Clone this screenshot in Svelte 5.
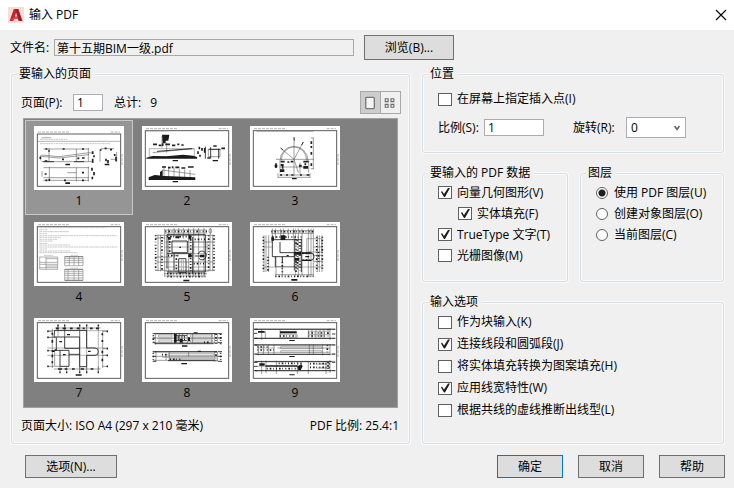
<script>
  let file = $state("第十五期BIM一级.pdf");
  let page = $state("1");
  let view = $state("single");
  let selected = $state(1);
  let onScreen = $state(false);
  let scale = $state("1");
  let rotation = $state("0");
  let layer = $state("pdf");

  let data = $state([
    { label: "向量几何图形(V)", checked: true },
    { label: "实体填充(F)", checked: true, nested: true },
    { label: "TrueType 文字(T)", checked: true },
    { label: "光栅图像(M)", checked: false },
  ]);

  let options = $state([
    { label: "作为块输入(K)", checked: false },
    { label: "连接线段和圆弧段(J)", checked: true },
    { label: "将实体填充转换为图案填充(H)", checked: false },
    { label: "应用线宽特性(W)", checked: true },
    { label: "根据共线的虚线推断出线型(L)", checked: false },
  ]);

  const layers = [
    { value: "pdf", label: "使用 PDF 图层(U)" },
    { value: "object", label: "创建对象图层(O)" },
    { value: "current", label: "当前图层(C)" },
  ];

  // Sheet previews, 270x192 units: thin lines, heavy lines, dashed annotations, solid areas
  const sheets = [
    {
      top: 24,
      gray: "M10 46H260M22 35H52",
      faint: "M18 40H100M18 53H230",
      thin: "M28 69H165M22 87L75 92L165 80L178 82M22 91L75 96L165 86M22 107H178M45 66V107M127 69V107M163 66V107M28 125H165M28 155H165M46 122V166M127 125V166M163 122V166M100 140H127M28 163H165M200 68H240M198 70V107M248 78V108M230 100H248M20 87V103M24 135V152",
      heavy: "M28 107H60M120 107H150",
      blobs: "M34 69H40M45 73V77M86 69H92M144 69H150M84 100H90M130 97H136M144 96H152M32 105H40M32 144H38M144 140H150M34 163H40M46 159V165M90 163H96M144 163H150M176 76V84M180 88V94M176 98V110M174 125V134M180 138V148M175 152V160M200 70V74M212 67H218M228 71H234M242 84V90M246 92V106M216 98V106M222 102V112M19 92V99",
      solid: "M94 113h14v5h-14zM94 169h14v5h-14zM212 113h14v5h-14z",
    },
    {
      faint: "M14 16H75",
      gray: "M22 68H157V92H22z",
      thin: "M32 80L90 74L155 68M60 30V65M74 50V80M66 120V160M80 122V155M96 125V155M112 128V155M128 130V155M144 132V155M60 132L160 145M199 70H234V92H199z",
      heavy: "M45 76L150 68M190 62V98M206 64V96M230 68V98M200 70H235",
      blobs: "M33 55H45M50 58H58M62 52V60M70 55H84M90 58H100M106 55H112M118 57H125M60 123H72M78 125H86M92 121V127M100 124H112M118 126H130M138 123H155M172 62V70M168 76V84M174 86V92M180 66V74M188 66V80M238 67H249M196 96H206M214 60H224",
      solid: "M60 26h22l-3 18h-8v8h-9zM13 95l20-5 40 1 50-5 30 3 12 4v5H13zM20 154l18-7 32 3 90 4v8H20zM92 102h16v4H92zM212 102h16v4h-16zM92 165h16v4H92zM54 138l8-6v22h-8z",
    },
    {
      gray: "M20 16H190",
      thin: "M90 105A42 44 0 1 1 174 105M94 103A38 40 0 1 1 170 103M132 34V150M132 100L160 48M132 100L92 66M78 100H192M190 36V128M132 100L145 140M88 123H175M88 147H180M85 154H180M90 105V140M176 105V140M150 110V145M182 36H192M182 128H192M84 142V156M180 142V156",
      heavy: "M132 34L133 44M160 48L155 57M92 66L99 72",
      blobs: "M92 107H104M112 108H118M122 107H130M160 107H176M184 46V54M184 60V66M184 78V86M184 112V120M90 147H96M108 147H114M124 147H130M150 147H156M170 147H178M78 112V126M98 114V128M166 112V118",
      solid: "M74 116h8v8h-8zM92 114h8v6h-8zM90 130h13v8H90zM147 116h8v6h-8zM160 120h14v8h-14zM126 156h14v4h-14z",
    },
    {
      faint: "M16 17H215M16 23H40M16 29H105M16 35H40M16 41H250M16 46H80M16 52H70M16 57H55M16 64H40M16 69H110M16 75H250M16 81H40M16 87H110M16 92H130M30 100H58M110 100H132M110 138H132",
      gray: "M17 105H71V142H17zM36 105V142M36 110H71M17 121H71M17 127H71M36 132H71M17 137H71M92 104H147V131H92zM92 110H147M92 116H147M92 122H147M106 104V131M120 104V131M134 104V131M92 142H147V175H92zM92 148H147M92 154H147M92 160H147M92 168H147M102 142V175M120 142V175M134 142V175",
      thin: "M92 104H147M92 142H147M92 175H147",
    },
    {
      gray: "M70 60H200M70 75H200M70 135H200M70 148H200M155 60H195V95H155zM118 112V150M124 112V150",
      thin: "M40 40H218M40 48H70M195 60H218M40 105H90M40 120H218M40 145H218M48 38V148M56 38V148M68 20V165M80 20V165M96 18V45M110 18V50M124 18V50M140 18V165M155 18V165M170 18V165M186 18V165M204 38V148M212 38V148M68 24H195M68 33H195M70 162H190M66 155H195M205 18V38M201 27A4 7 0 1 0 209 27A4 7 0 1 0 201 27",
      heavy: "M90 57H136V92H90zM75 38V140M75 38H190M75 95H150M152 45V155M110 110H132V152H110zM190 38V150M75 150H190M158 102H190M96 95V145M168 96A12 12 0 0 1 192 104A12 12 0 0 1 170 108",
      dash: "M70 28H195M75 44H148M41 40V148M60 45V148M83 48V92M103 100V148M146 42V150M200 40V148M216 40V145M78 101H110M75 155H192M76 164H190M158 52H190M155 125H190M138 102H150",
      solid: "M112 74h5v4h-5zM124 173h18v5h-18zM100 43h12v6h-12zM78 45h8v8h-8zM140 40h8v12h-8zM174 98h12v8h-12zM140 96h8v10h-8z",
    },
    {
      gray: "M40 75H68M40 135H218M136 20V165M170 50H215V90H170z",
      thin: "M42 40V150M48 40V150M56 40V150M67 20V53M76 20V50M92 20V50M100 20V50M115 20V50M130 20V50M145 20V165M156 20V165M175 20V165M183 20V165M190 20V165M202 40V150M208 40V150M216 40V150M64 26H190M64 34H190M78 104V165M97 104V165M76 158H190M76 134H156M40 60H67M190 75H218M190 100H218M190 118H218",
      heavy: "M67 40V104H133V92H90V60M133 50V145M67 53H155M155 93H182A10 11 0 0 1 182 115H155M154 50V150M76 104V134M97 104V120",
      dash: "M64 29H190M68 45H155M40 44V148M54 104V148M138 52V150M142 55V148M200 44V148M206 90V120M217 44V140M158 94H185M158 114H185M76 163H190M97 120V155M150 60V145",
      solid: "M92 40h14v14H92zM64 46h8v10h-8zM133 90h20v8h-20zM134 108h14v8h-14zM156 91h28v4h-28zM156 113h28v4h-28zM124 171h18v5h-18zM110 99h6v4h-6zM166 102h12v4h-12z",
    },
    {
      gray: "M40 38H222M40 58H62M40 90H222M40 112H222M72 20V56M92 20V56M137 20V165M158 20V165M193 20V165",
      thin: "M55 32V150M62 30H200M206 38V150M60 153H200M72 22V40M92 22V56M137 22V56M158 22V38M193 22V38M78 145V163M98 145V163M137 145V163M158 145V163M193 145V163M40 40H55M40 58H70M40 145H60M206 40H222M206 92H222M206 112H222M206 145H222M40 98H62M62 98V145H78",
      heavy: "M62 37H158V90H183A10 11 0 0 1 183 112H158V146H137V57H60zM92 57V91H137M78 97V145H105V97H62M105 109H137M67 60V96",
      blobs: "M70 22H74M90 22H94M135 22H139M156 22H160M191 22H195M76 163H80M96 163H100M135 163H139M156 163H160M191 163H195M40 40H44M40 58H44M40 98H44M40 145H44M218 40H222M218 92H222M218 112H222M218 145H222M66 31H74M86 31H96M108 31H116M128 31H136M146 31H152M168 31H176M186 31H194M55 44V50M55 66V74M55 110V118M55 130V136M205 46V52M205 66V72M205 98V106M205 122V130M72 153H84M92 153H100M114 153H122M140 153H150M170 153H178M62 96H68",
      solid: "M99 48h9v4h-9zM76 69h8v4h-8zM87 108h8v4h-8zM162 98h8v4h-8zM125 169h18v4h-18zM53 97h9v5h-9z",
    },
    {
      gray: "M45 62H95M138 62H215M60 118H215M50 51H90V57H50zM50 66H90V72H50zM145 51H210V57H145zM145 66H210V72H145zM78 107H215V112H78zM82 121H215V125H82z",
      thin: "M38 47H228M38 60H228M38 74H228M34 102H228M42 115H228M34 127H228M98 45V78M112 45V78M122 45V78M136 45V78M218 45V78M226 45V78M218 100V130M226 100V130M40 45V80M42 100V132M72 110V127M140 102V115M152 47V74M210 47V74M82 100V127",
      heavy: "M40 47H225M95 53H135M95 68H135M38 77H215M40 101H225M78 128H220M32 47H40M32 60H40M32 74H40M32 101H42M32 115H42M32 130H42M228 47H240M228 60H240M228 74H240M228 101H240M228 115H240M228 130H240",
      dash: "M98 57H132M98 64H132M34 52V80M236 48V80M222 48V78M222 100V130M34 104V132M236 104V132M60 110H76M186 73H205M84 124H118",
      solid: "M96 48h8v26H96zM114 62h8v12h-8zM138 58h6v12h-6zM120 82h16v4h-16zM118 135h17v4h-17zM155 43h12v3h-12zM167 98h10v3h-10z",
    },
    {
      gray: "M175 40H240M175 50H240M22 90H75M22 103H240M20 145H46M90 50H142V58H90zM92 86H215V92H92zM92 98H215V103H92z",
      thin: "M12 33H256M12 61H256M12 80H256M15 109H256M12 130H256M15 158H256M35 33V66M90 36V60M175 36V60M186 36V60M198 36V60M210 36V60M222 36V60M240 30V66M25 80V112M40 80V110M55 80V110M72 80V110M178 80V108M190 80V108M218 80V112M240 78V112M35 128V168M48 128V166M79 128V168M142 130V168M175 130V168M228 130V168M240 126V165M46 40V61M82 90H240M200 138H240M200 150H240",
      heavy: "M15 34H245M15 61H245M15 81H245M20 109H240M15 131H245M15 158H245M90 44H140M12 34H22M12 46H22M12 61H22M12 81H22M12 108H22M12 133H22M12 145H22M12 158H22M246 34H256M246 48H256M246 61H256M246 81H256M246 108H256M246 133H256M246 158H256",
      dash: "M175 45H240M22 87H55M22 96H75M86 136H155M50 152H140M180 137H240M180 148H240M234 34V60M232 82V108M234 132V160M175 54H230M90 54H142",
      solid: "M90 40h50v6H90zM24 39h20v5H24zM46 142h96v4H46zM142 145l12-6 4 6-6 12-8-2zM118 66h16v3h-16zM118 114h16v3h-16zM118 169h16v3h-16zM28 136h16v7H28z",
    },
  ];
</script>

{#snippet sheet(s)}
  {@const top = s.top ?? 14}
  <svg class="sheet" viewBox="0 0 270 192" fill="none" aria-hidden="true">
    <path d="M12 {top - 6}H105M230 {top - 6}H258M264 84V120" stroke="#b4b4b4" stroke-width="3" stroke-dasharray="9 3" />
    <rect x="10" y={top} width="250" height={181 - top} stroke="#5c5c5c" stroke-width="3" />
    {#if s.faint}<path d={s.faint} stroke="#bdbdbd" stroke-width="2.4" stroke-dasharray="8 1.5 5 1" />{/if}
    {#if s.gray}<path d={s.gray} stroke="#8c8c8c" stroke-width="2" />{/if}
    <path d={s.thin} stroke="#555" stroke-width="1.7" />
    {#if s.heavy}<path d={s.heavy} stroke="#222" stroke-width="2.6" />{/if}
    {#if s.dash}<path d={s.dash} stroke="#222" stroke-width="5" stroke-dasharray="3 6 5 5 2 7" />{/if}
    {#if s.blobs}<path d={s.blobs} stroke="#222" stroke-width="5" />{/if}
    {#if s.solid}<path d={s.solid} fill="#1a1a1a" />{/if}
  </svg>
{/snippet}

<main class="dialog">
  <header class="titlebar">
    <svg class="logo" viewBox="0 0 16 16" aria-hidden="true">
      <rect width="16" height="16" rx="1" fill="#f5deda" />
      <path d="M1.600 14L5.800 2H10.200L14.400 14H10.800L10 11.600H6.400L5.200 14z" fill="#c5262c" />
      <path d="M8 2H10.200L14.400 14H10.800L8.400 5.600z" fill="#a51c24" />
      <path d="M7 9.400L8.100 5.800L9.200 9.400z" fill="#f5deda" />
      <path d="M1.600 14L6.400 10H9.800V11.800H7.400z" fill="#dd4a42" />
    </svg>
    <h1>输入 PDF</h1>
    <button class="close" aria-label="关闭">
      <svg viewBox="0 0 12 12" fill="none" stroke="#000" stroke-width="1.1"><path d="M1 1L11 11M11 1L1 11" /></svg>
    </button>
  </header>

  <div class="file-row">
    <label for="file">文件名:</label>
    <input id="file" class="file" type="text" readonly value={file} />
    <button class="btn browse">浏览(B)...</button>
  </div>

  <div class="columns">
    <fieldset class="pages">
      <legend>要输入的页面</legend>
      <div class="pages-body">
        <div class="page-row">
          <label for="page">页面(P):</label>
          <input id="page" class="page" type="text" bind:value={page} />
          <span>总计:</span>
          <span class="total">9</span>
          <div class="views">
            <button class:active={view === "single"} aria-label="单页" onclick={() => (view = "single")}>
              <svg viewBox="0 0 20 20" fill="#f4f4f4" stroke="#777" stroke-width="1.4"><rect x="5" y="4" width="9" height="12" rx="1" /></svg>
            </button>
            <button class:active={view === "grid"} aria-label="缩略图" onclick={() => (view = "grid")}>
              <svg viewBox="0 0 20 20" fill="none" stroke="#6c6c6c" stroke-width="1.2">
                <path d="M4.500 5.500h3v3h-3zM10.500 5.500h3v3h-3zM4.500 11.500h3v3h-3zM10.500 11.500h3v3h-3z" />
              </svg>
            </button>
          </div>
        </div>

        <div class="thumbs">
          {#each sheets as s, i}
            <button class="thumb" class:selected={selected === i + 1} onclick={() => { selected = i + 1; page = String(i + 1); }}>
              {@render sheet(s)}
              <span>{i + 1}</span>
            </button>
          {/each}
        </div>

        <div class="page-info">
          <span>页面大小: ISO A4 (297 x 210 毫米)</span>
          <span>PDF 比例: 25.4:1</span>
        </div>
      </div>
    </fieldset>

    <div class="settings">
      <fieldset>
        <legend>位置</legend>
        <div class="location">
          <label class="check"><input type="checkbox" bind:checked={onScreen} />在屏幕上指定插入点(I)</label>
          <div class="location-row">
            <label class="scale-label" for="scale">比例(S):</label>
            <input id="scale" class="scale" type="text" bind:value={scale} />
            <label class="rotation-label" for="rotation">旋转(R):</label>
            <div class="rotation">
              <select id="rotation" bind:value={rotation}>
                <option>0</option>
                <option>90</option>
                <option>180</option>
                <option>270</option>
              </select>
              <svg viewBox="0 0 6 6" fill="none" stroke="#606060" stroke-width="1.500" aria-hidden="true"><path d="M0.600 1L3 4.400L5.400 1" /></svg>
            </div>
          </div>
        </div>
      </fieldset>

      <div class="pair">
        <fieldset>
          <legend>要输入的 PDF 数据</legend>
          <div class="list compact">
            {#each data as item}
              <label class="check" class:nested={item.nested}><input type="checkbox" bind:checked={item.checked} />{item.label}</label>
            {/each}
          </div>
        </fieldset>
        <fieldset>
          <legend>图层</legend>
          <div class="list compact">
            {#each layers as item}
              <label class="radio"><input type="radio" name="layer" value={item.value} bind:group={layer} />{item.label}</label>
            {/each}
          </div>
        </fieldset>
      </div>

      <fieldset>
        <legend>输入选项</legend>
        <div class="list import">
          {#each options as item}
            <label class="check"><input type="checkbox" bind:checked={item.checked} />{item.label}</label>
          {/each}
        </div>
      </fieldset>
    </div>
  </div>

  <footer>
    <button class="btn more">选项(N)...</button>
    <button class="btn default">确定</button>
    <button class="btn">取消</button>
    <button class="btn">帮助</button>
  </footer>
</main>

<style>
  :global(body) {
    background: #f0f0f0;
  }

  .dialog,
  .dialog button,
  .dialog input,
  .dialog select {
    box-sizing: border-box;
    font-family: "Open Sans", "Noto Sans CJK SC", sans-serif;
    font-size: 12px;
    line-height: 16px;
    color: #000;
  }

  .dialog {
    min-height: 100vh;
    background: #f0f0f0;
    white-space: nowrap;
  }

  button,
  input,
  select {
    margin: 0;
    padding: 0;
    border-radius: 0;
  }

  .titlebar {
    display: flex;
    align-items: center;
    height: 30px;
    padding: 0 7px 0 8px;
    background: #fff;
  }

  .logo {
    width: 16px;
    height: 16px;
  }

  h1 {
    flex: 1;
    margin: 0 0 0 5px;
    font-size: 12px;
    font-weight: 400;
  }

  .close {
    display: flex;
    border: 0;
    background: none;
  }

  .close svg {
    width: 12px;
    height: 12px;
  }

  .file-row {
    display: flex;
    align-items: center;
    padding: 5px 10px 6px;
  }

  .file-row label {
    width: 44px;
  }

  input[type="text"] {
    height: 17px;
    padding: 0 3px;
    border: 1px solid #abadb3;
    background: #fff;
    outline: none;
  }

  .dialog .file {
    flex: 0 1 300px;
    min-width: 0;
    padding: 0 2px;
    border-color: #a8a8a8;
    background: #f0f0f0;
  }

  .btn {
    width: 66px;
    height: 23px;
    border: 1px solid #707070;
    background: #ddd;
  }

  .browse {
    width: 90px;
    height: 25px;
    margin-left: 10px;
  }

  .columns {
    display: grid;
    grid-template-columns: 399fr 302fr;
    gap: 12px;
    padding: 0 10px 0 11px;
  }

  fieldset {
    min-width: 0;
    margin: 0;
    padding: 0;
    border: 1px solid #d5dfe5;
    border-radius: 3px;
    box-shadow: 0 0 0 1px #fafafa, inset 0 0 0 1px #fafafa;
  }

  legend {
    height: 16px;
    margin-left: 5px;
    padding: 0 4px 0 2px;
    background: #f0f0f0;
  }

  .pages-body {
    padding: 9px 8px;
  }

  .page-row {
    display: flex;
    align-items: center;
    height: 23px;
    padding-left: 1px;
  }

  .page-row label {
    width: 52px;
  }

  .page {
    width: 30px;
    margin-right: 11px;
  }

  .total {
    margin-left: 9px;
  }

  .views {
    display: flex;
    margin-left: auto;
    border: 1px solid #a8a8a8;
  }

  .views button {
    width: 19px;
    height: 21px;
    border: 0;
    background: #f0f0f0;
  }

  .views button + button {
    width: 20px;
    border-left: 1px solid #a8a8a8;
  }

  .views .active {
    background: #cdcdcd;
  }

  .views svg {
    display: block;
    width: 19px;
    height: 20px;
  }

  .thumbs {
    display: grid;
    grid-template-columns: repeat(auto-fill, 108px);
    row-gap: 1px;
    height: 290px;
    box-sizing: border-box;
    margin: 4px 3px 10px;
    padding: 1px;
    border: 1px solid #a0a0a0;
    background: #808080;
    overflow: hidden;
  }

  .thumb {
    display: flex;
    flex-direction: column;
    align-items: center;
    height: 95px;
    padding-top: 5px;
    border: 1px solid transparent;
    background: none;
  }

  .selected {
    border-color: #c8c8c8;
    background: #959595;
  }

  .sheet {
    width: 90px;
    height: 64px;
    margin-bottom: 3px;
    background: #fff;
  }

  .page-info {
    display: flex;
    justify-content: space-between;
    padding: 0 2px 0 1px;
  }

  .settings {
    display: flex;
    flex-direction: column;
    gap: 12px;
    min-width: 0;
  }

  .location {
    padding: 6px 15px 14px;
  }

  .location-row {
    display: flex;
    align-items: center;
    margin-top: 7px;
  }

  .scale-label {
    width: 46px;
  }

  .scale {
    width: 60px;
    margin-right: 29px;
  }

  .rotation-label {
    width: 53px;
  }

  .rotation {
    display: grid;
    align-items: center;
    width: 60px;
  }

  .rotation select,
  .rotation svg {
    grid-area: 1 / 1;
  }

  .rotation select {
    height: 21px;
    padding: 0 4px;
    border: 1px solid #abadb3;
    background: #fff;
    appearance: none;
  }

  .rotation svg {
    justify-self: end;
    width: 6px;
    height: 6px;
    margin-right: 6px;
    pointer-events: none;
  }

  .pair {
    display: grid;
    grid-template-columns: 146fr 144fr;
    gap: 12px;
  }

  .list {
    padding: 1px 0 15px 15px;
  }

  .import {
    padding-bottom: 22px;
  }

  .check,
  .radio {
    display: flex;
    align-items: center;
    gap: 5px;
    height: 22px;
  }

  .radio {
    gap: 6px;
  }

  .compact .check,
  .compact .radio {
    height: 21px;
  }

  .nested {
    margin-left: 20px;
  }

  .check input {
    width: 14px;
    height: 13px;
    border: 1px solid #606060;
    background: #fff;
    appearance: none;
  }

  .check input:checked::before {
    content: "";
    display: block;
    width: 12px;
    height: 11px;
    background: #1e1e1e;
    clip-path: polygon(2px 5px, 3px 4px, 5px 7px, 9px 1px, 11px 1px, 6px 10px, 5px 10px);
  }

  .radio input {
    width: 12px;
    height: 12px;
    border: 1px solid #606060;
    border-radius: 50%;
    background: #fff;
    appearance: none;
  }

  .radio input:checked {
    background: radial-gradient(circle, #1e1e1e 3px, #fff 4px);
  }

  footer {
    display: flex;
    gap: 15px;
    padding: 11px 9px 10px 25px;
  }

  .more {
    width: 92px;
    margin-right: auto;
  }

  .default {
    border-color: #0078d7;
  }
</style>
